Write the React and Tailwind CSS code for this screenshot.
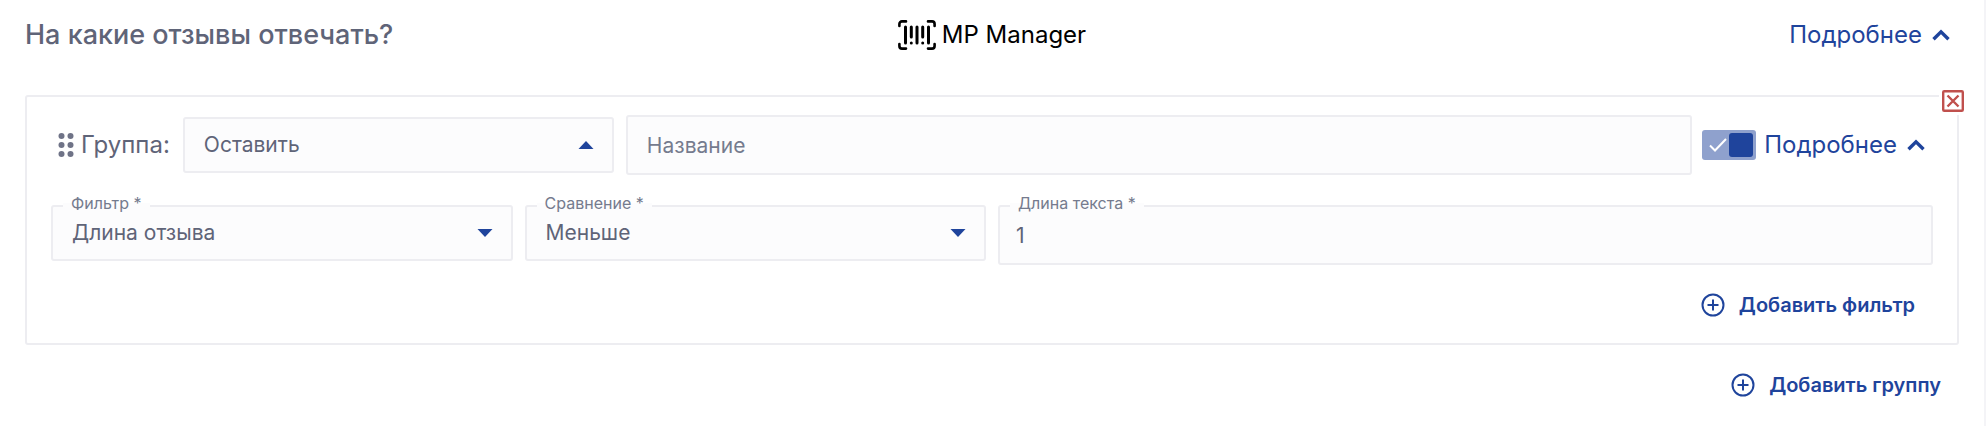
import React, { useState } from "react";

// Shared control look
const CONTROL =
  "w-full appearance-none rounded-[3px] border-2 border-[#ededf1] bg-[#fcfcfd] text-[21px] text-[#5f6478] focus:outline-none focus:border-[#1f449c]";

const Logo = () => (
  <div className="flex items-center gap-1.5 text-black">
    <svg width="38" height="30" viewBox="0 0 38 30" fill="none" stroke="currentColor" strokeLinecap="round" aria-hidden="true">
      <g strokeWidth="2.6">
        <path d="M1.4 6V4a2.6 2.6 0 0 1 2.6-2.6h4" />
        <path d="M30 1.4h4A2.6 2.6 0 0 1 36.6 4v2" />
        <path d="M1.4 24v2a2.6 2.6 0 0 0 2.6 2.6h4" />
        <path d="M30 28.6h4a2.6 2.6 0 0 0 2.6-2.6v-2" />
      </g>
      <g strokeWidth="3">
        <path d="M7.5 7v16" />
        <path d="M13.3 7v10M13.3 23v.1" />
        <path d="M19 7v16" />
        <path d="M24.7 7v10M24.7 23v.1" />
        <path d="M30.5 7v16" />
      </g>
    </svg>
    <span className="text-2xl leading-7">MP Manager</span>
  </div>
);

const Chevron = ({ open }) => (
  <svg width="18" height="12" viewBox="0 0 18 12" fill="none" className={open ? "" : "rotate-180"} aria-hidden="true">
    <path d="M1.5 10.3 9 2.8l7.5 7.5" stroke="currentColor" strokeWidth="3.4" />
  </svg>
);

const MoreButton = ({ open, onClick }) => (
  <button type="button" onClick={onClick} aria-expanded={open} className="flex shrink-0 items-center gap-2.5 text-2xl text-[#1f449c]">
    Подробнее
    <Chevron open={open} />
  </button>
);

const AddButton = ({ children }) => (
  <button type="button" className="flex items-center gap-3.5 text-xl leading-6 font-semibold text-[#1f449c]">
    <svg width="24" height="24" viewBox="0 0 24 24" fill="none" stroke="currentColor" strokeWidth="2" aria-hidden="true">
      <circle cx="12" cy="12" r="10.5" />
      <path d="M12 6.5v11M6.5 12h11" />
    </svg>
    {children}
  </button>
);

// Label that sits in the top border of a field
const FieldLabel = ({ htmlFor, children }) => (
  <label
    htmlFor={htmlFor}
    className="absolute -top-3 left-3 bg-linear-to-b from-white from-50% to-[#fcfcfd] to-50% px-2 text-base leading-5 text-[#757b8e]"
  >
    {children}
  </label>
);

const SelectField = ({ id, label, ariaLabel, options, up = false }) => (
  <div className="relative">
    {label && <FieldLabel htmlFor={id}>{label}</FieldLabel>}
    <select id={id} aria-label={ariaLabel} className={`${CONTROL} h-14 pr-12 pl-[19px]`}>
      {options.map((option) => (
        <option key={option}>{option}</option>
      ))}
    </select>
    <svg
      width="16"
      height="8"
      viewBox="0 0 16 8"
      fill="#1f449c"
      className={`pointer-events-none absolute top-6 right-5 ${up ? "rotate-180" : ""}`}
      aria-hidden="true"
    >
      <path d="M.5 0h15L8 8z" />
    </svg>
  </div>
);

const App = () => {
  const [sectionOpen, setSectionOpen] = useState(true);
  const [groupOpen, setGroupOpen] = useState(true);
  const [enabled, setEnabled] = useState(true);
  const [name, setName] = useState("");
  const [length, setLength] = useState("1");

  return (
    <main className="min-h-screen border-r-2 border-[#f4f4f7] bg-white pt-[17px] pr-[25px] pl-[25px] font-[Inter,sans-serif] text-[#5f6478]">
      {/* Header */}
      <header className="grid grid-cols-[1fr_auto_1fr] items-center">
        <h1 className="text-[27px] leading-9 font-medium">На какие отзывы отвечать?</h1>
        <Logo />
        <div className="flex justify-end pr-[9px]">
          <MoreButton open={sectionOpen} onClick={() => setSectionOpen(!sectionOpen)} />
        </div>
      </header>

      {/* Group */}
      <section className="relative mt-[42px] rounded-[3px] border-2 border-[#ededf1] pt-[18px] pr-6 pb-[26px] pl-6">
        <button type="button" aria-label="Удалить группу" className="absolute -top-2.5 -right-2.5 bg-white p-[3px] text-[#c0504d]">
          <svg width="22" height="22" viewBox="0 0 22 22" fill="none" stroke="currentColor" strokeWidth="2.4" aria-hidden="true">
            <rect x="1.2" y="1.2" width="19.6" height="19.6" rx="1" />
            <path d="m5.5 5.5 11 11M16.5 5.5l-11 11" />
          </svg>
        </button>

        <div className="flex items-center pr-2">
          <div className="flex items-center gap-[7px] pl-[7px]">
            <svg width="16" height="24" viewBox="0 0 16 24" fill="#6f7387" aria-hidden="true">
              <circle cx="3.5" cy="3" r="3" />
              <circle cx="12.5" cy="3" r="3" />
              <circle cx="3.5" cy="12" r="3" />
              <circle cx="12.5" cy="12" r="3" />
              <circle cx="3.5" cy="21" r="3" />
              <circle cx="12.5" cy="21" r="3" />
            </svg>
            <span className="text-2xl">Группа:</span>
          </div>
          <div className="ml-[13px] w-[431px] shrink-0">
            <SelectField id="action" ariaLabel="Группа" options={["Оставить", "Исключить"]} up />
          </div>
          <input
            type="text"
            aria-label="Название"
            placeholder="Название"
            value={name}
            onChange={(e) => setName(e.target.value)}
            className={`${CONTROL} ml-3 h-15 min-w-0 flex-1 px-[19px] placeholder:text-[#757b8e]`}
          />
          <label className="relative ml-2.5 flex h-[30px] w-[54px] shrink-0 cursor-pointer items-center rounded-[3px] bg-[#8fa1cd] p-[3px]">
            <input
              type="checkbox"
              role="switch"
              aria-label="Включить группу"
              checked={enabled}
              onChange={(e) => setEnabled(e.target.checked)}
              className="absolute inset-0 cursor-pointer opacity-0"
            />
            <svg width="18" height="14" viewBox="0 0 18 14" fill="none" className="ml-1" aria-hidden="true">
              <path d="m1 7.5 5 5L17 1" stroke="white" strokeWidth="2" />
            </svg>
            <span className="ml-auto size-6 rounded-[3px] bg-[#1f449c]" />
          </label>
          <div className="ml-2">
            <MoreButton open={groupOpen} onClick={() => setGroupOpen(!groupOpen)} />
          </div>
        </div>

        {/* Filter row */}
        <div className="mt-[30px] grid grid-cols-4 items-start gap-3">
          <SelectField id="filter" label="Фильтр *" options={["Длина отзыва", "Оценка"]} />
          <SelectField id="compare" label="Сравнение *" options={["Меньше", "Больше"]} />
          <div className="relative col-span-2">
            <FieldLabel htmlFor="length">Длина текста *</FieldLabel>
            <input
              id="length"
              type="text"
              value={length}
              onChange={(e) => setLength(e.target.value)}
              className={`${CONTROL} h-15 px-4`}
            />
          </div>
        </div>

        <div className="mt-7 mr-[18px] flex justify-end">
          <AddButton>Добавить фильтр</AddButton>
        </div>
      </section>

      <div className="mt-7 mr-[18px] flex justify-end">
        <AddButton>Добавить группу</AddButton>
      </div>
    </main>
  );
};

export default App;
